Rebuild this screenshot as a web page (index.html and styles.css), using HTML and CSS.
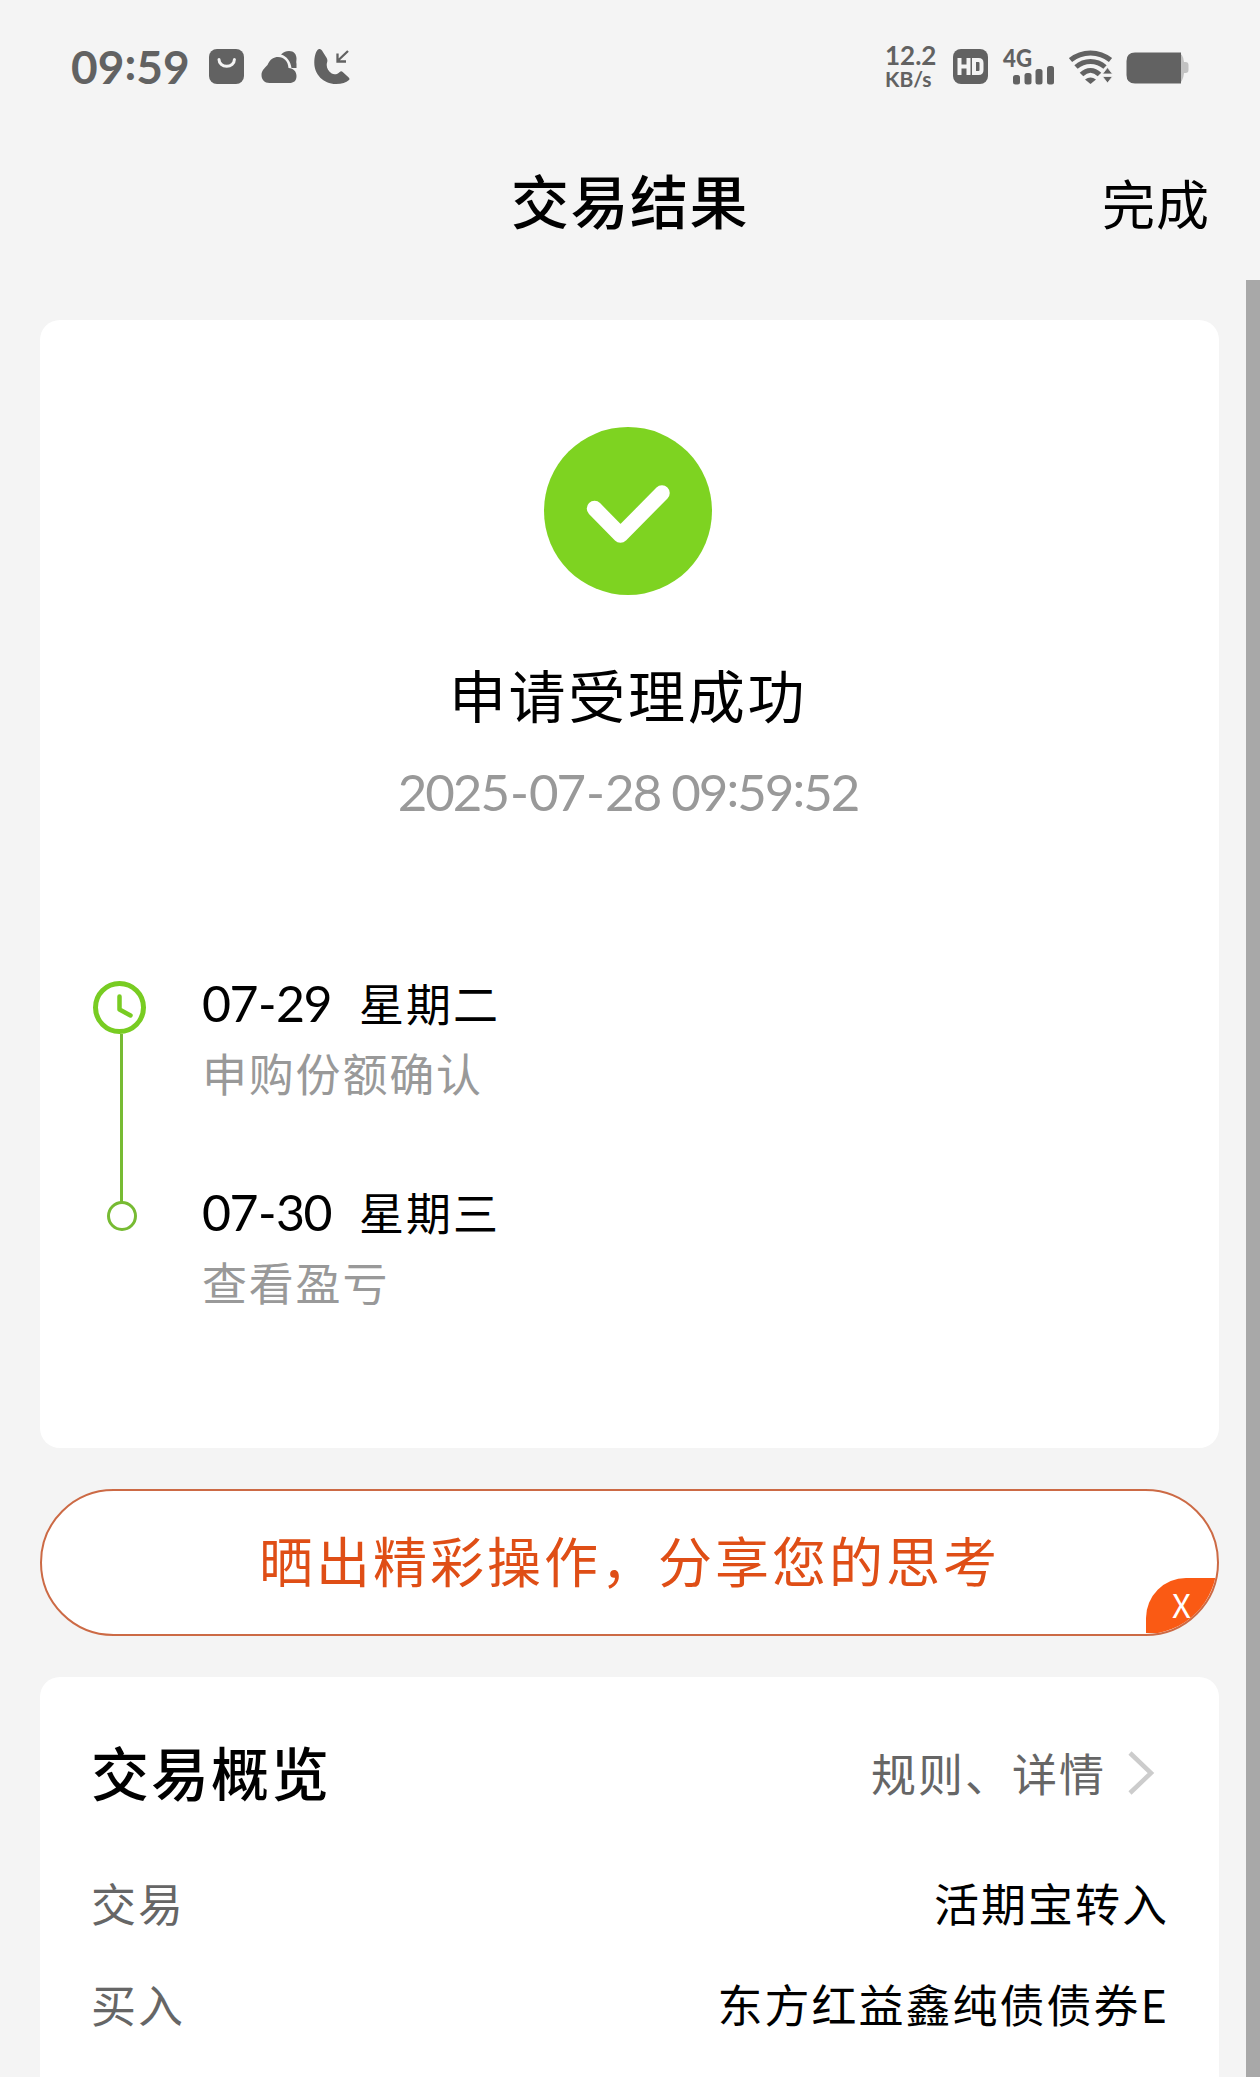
FILE: index.html
```html
<!DOCTYPE html>
<html lang="zh-CN">
<head>
  <meta charset="UTF-8" />
  <meta name="viewport" content="width=device-width, initial-scale=1.0"/>
  <title>交易结果</title>
  <link rel="stylesheet" href="styles.css">
</head>
<body>

  <div class="status-bar">
    <div class="status-left">
      <span class="clock">09<b>:</b>59</span>
      <svg class="icon" width="35" height="35" viewBox="0 0 35 35">
        <rect width="35" height="35" rx="8" fill="#626262"/>
        <path d="M10 10.5a7.7 6.8 0 0 0 15.400 0" fill="none" stroke="#f4f4f4" stroke-width="3" stroke-linecap="round"/>
      </svg>
      <svg class="icon" width="36" height="35" viewBox="0 0 36 35">
        <path d="M8.500 34C3.500 34 .5 30.500 .5 26c0-4 2.500-6.500 6-10C9 10 13 8 17 8c6 0 10 4 10.500 11 5 .5 8 3.500 8 8 0 5-3 7-7 7z" fill="#626262"/>
        <path d="M20 5.500C23 2.500 25 2 28 2c5 0 7.500 3.500 7.500 7.500 0 2-.5 3.500 0 5.500v4h-5C29.500 12 26 7.500 20 5.500z" fill="#626262"/>
      </svg>
      <svg class="icon" width="36" height="35" viewBox="0 0 36 35">
        <path d="M4 .5C1.500 3 .3 8 .3 14 .3 25 9 35 22 35c6 0 10-1.500 13-4 .8-.8.5-1.800-.3-2.500l-6-5.500c-1-.9-2-.9-3 0-2 2-5 3.200-8 1.500-4-2.300-6-7-4.500-11.500.5-1.500 0-2.800-.5-4L8 1.500C7 0 5.300-.5 4 .5z" fill="#626262"/>
        <path d="M34 2L23.500 12M23.500 4.500V12.500H32" fill="none" stroke="#626262" stroke-width="2.300"/>
      </svg>
    </div>
    <div class="status-right">
      <div class="speed">
        <span class="speed-num">12.2</span>
        <span class="speed-unit">KB/s</span>
      </div>
      <svg class="icon-hd" width="35" height="35" viewBox="0 0 35 35">
        <rect width="35" height="35" rx="8" fill="#626262"/>
        <path d="M6.500 9v17M15.500 9v17M6.500 17.500h9" fill="none" stroke="#f4f4f4" stroke-width="4"/>
        <path d="M21 11h4.500q3 0 3 3v7q0 3-3 3H21z" fill="none" stroke="#f4f4f4" stroke-width="4"/>
      </svg>
      <svg class="icon-signal" width="52" height="36" viewBox="0 0 52 36">
        <text x="0" y="18" class="net-type" textLength="29" lengthAdjust="spacingAndGlyphs">4G</text>
        <rect x="10" y="26" width="7" height="9.500" rx="2.500"/>
        <rect x="21.500" y="24" width="7" height="11.500" rx="2.500"/>
        <rect x="32.500" y="20" width="7" height="15.500" rx="2.500"/>
        <rect x="44" y="17" width="7" height="18.500" rx="2.500"/>
      </svg>
      <svg class="icon-wifi" width="44" height="35" viewBox="0 0 44 35">
        <g fill="none" stroke="#626262" stroke-width="5">
          <path d="M1.500 11C13 1.500 30 1.500 41.500 11"/>
          <path d="M7 18C15.500 10.500 27.500 10.500 36 18"/>
          <path d="M12.500 25.500C18 20 25 20 30.500 25.500"/>
        </g>
        <path d="M16 30.500q5.500-4 11 0L21.500 35z" fill="#626262"/>
        <path d="M33.500 25L38.500 18.500 43.500 25zM33.500 27.500h10L38.500 34z" fill="#626262" stroke="#f4f4f4" stroke-width=".8"/>
      </svg>
      <svg class="icon-battery" width="64" height="32" viewBox="0 0 64 32">
        <path d="M50 1h2q5 0 6 9h1.500q3 0 3 3v5q0 3-3 3H58q-1 10-6 10h-2z" fill="#c2c2c2"/>
        <path d="M9 .5h46v31H9q-8.500 0-8.500-8.500V9Q.5 .5 9 .5z" fill="#626262"/>
      </svg>
    </div>
  </div>

  <div class="nav-bar">
    <h1 class="nav-title">交易结果</h1>
    <a class="nav-done">完成</a>
  </div>

  <div class="content">
    <div class="card result-card">
      <svg class="success-icon" width="168" height="168" viewBox="0 0 168 168">
        <circle cx="84" cy="84" r="84" fill="#7ed321"/>
        <path d="M50.500 81.500L76.500 108 118 66" fill="none" stroke="#fff" stroke-width="15.500" stroke-linecap="round" stroke-linejoin="round"/>
      </svg>
      <h2 class="result-title">申请受理成功</h2>
      <p class="result-time">2025<i>-</i>07<i>-</i>28 09<b>:</b>59<b>:</b>52</p>

      <div class="timeline">
        <svg class="timeline-axis" width="54" height="250" viewBox="0 0 54 250">
          <path d="M28.500 53v168" stroke="#77bb33" stroke-width="3"/>
          <circle cx="26.500" cy="26.500" r="24" fill="#fff" stroke="#78cc22" stroke-width="5"/>
          <path d="M26.500 15.500v13l11 6" fill="none" stroke="#78cc22" stroke-width="4.500" stroke-linecap="round" stroke-linejoin="round"/>
          <circle cx="29" cy="235" r="13.500" fill="#fff" stroke="#77bb33" stroke-width="3"/>
        </svg>
        <div class="timeline-list">
          <div class="step">
            <p class="step-date"><span class="num">07<i>-</i>29</span><span>星期二</span></p>
            <p class="step-desc">申购份额确认</p>
          </div>
          <div class="step">
            <p class="step-date"><span class="num">07<i>-</i>30</span><span>星期三</span></p>
            <p class="step-desc">查看盈亏</p>
          </div>
        </div>
      </div>
    </div>

    <div class="share-bar">
      <span class="share-text">晒出精彩操作，分享您的思考</span>
      <span class="share-close">X</span>
    </div>

    <div class="card overview-card">
      <div class="overview-head">
        <h2 class="overview-title">交易概览</h2>
        <a class="overview-link">规则、详情
          <svg width="28" height="46" viewBox="0 0 28 46">
            <path d="M3 3L24 23 3 43" fill="none" stroke="#ccc" stroke-width="4.500"/>
          </svg>
        </a>
      </div>
      <div class="row">
        <span class="label">交易</span>
        <span class="value">活期宝转入</span>
      </div>
      <div class="row">
        <span class="label">买入</span>
        <span class="value">东方红益鑫纯债债券E</span>
      </div>
    </div>
  </div>

  <div class="scrollbar"></div>

</body>
</html>
```

FILE: styles.css
```css
* { box-sizing: border-box; }

body {
  margin: 0;
  height: 2077px;
  overflow: hidden;
  position: relative;
  background: #f4f4f4;
  color: #000;
  font-family: 'Noto Sans CJK SC', sans-serif;
}

h1, h2, p { margin: 0; }
i, b { font-style: normal; font-weight: inherit; }
b { vertical-align: 4px; line-height: 1; }
svg { display: block; flex: none; }

/* Status bar */
.status-bar {
  display: flex;
  justify-content: space-between;
  align-items: center;
  height: 133px;
  padding: 0 70px 0 71px;
  color: #626262;
  font-family: Lato, sans-serif;
}

.status-left, .status-right {
  display: flex;
  align-items: center;
}

.status-left { gap: 17px; }

.clock {
  width: 121px;
  font-size: 46px;
  line-height: 60px;
  font-weight: 700;
  white-space: nowrap;
}

.speed {
  display: flex;
  flex-direction: column;
  width: 50px;
  margin-right: 18px;
  font-weight: 700;
  white-space: nowrap;
}

.speed-num { font-size: 26px; line-height: 25px; }
.speed-unit { font-size: 21px; line-height: 22px; }
.icon-hd { margin-right: 15px; }
.icon-signal { margin-right: 14px; fill: #626262; overflow: visible; }
.net-type { font: 900 24px Lato, sans-serif; }
.icon-wifi { margin-right: 13px; }
.icon-battery { margin-top: 3px; }

/* Title */
.nav-bar {
  display: grid;
  grid-template-columns: 1fr auto 1fr;
  align-items: center;
  height: 147px;
  padding: 0 50px 15px 50px;
}

.nav-title {
  grid-column: 2;
  font-size: 58px;
  line-height: 80px;
  font-weight: 500;
  letter-spacing: 1.500px;
}

.nav-done {
  justify-self: end;
  padding-top: 6px;
  font-size: 53px;
  line-height: 76px;
  letter-spacing: 1px;
}

.content {
  display: flex;
  flex-direction: column;
  gap: 41px;
  padding: 40px 41px 0 40px;
}

.card {
  background: #fff;
  border-radius: 20px;
}

/* Result */
.result-card {
  display: flex;
  flex-direction: column;
  align-items: center;
  height: 1128px;
  padding: 107px 3px 0 0;
}

.result-title {
  margin-top: 58px;
  font-size: 57px;
  line-height: 80px;
  font-weight: 400;
  letter-spacing: 2.700px;
}

.result-time {
  margin-top: 29px;
  height: 60px;
  color: #999;
  font-family: Lato, sans-serif;
  font-size: 51px;
  line-height: 60px;
  letter-spacing: -2px;
  white-space: nowrap;
}

.result-time i { margin: 0 2px; }

.timeline {
  display: flex;
  align-self: stretch;
  gap: 55px;
  margin-top: 159px;
  padding-left: 53px;
}

.timeline-list {
  display: flex;
  flex-direction: column;
  gap: 79px;
}

.step-date {
  display: flex;
  gap: 27px;
  font-size: 45px;
  line-height: 60px;
  height: 60px;
  margin-top: -8px;
  letter-spacing: 2px;
}

.num {
  width: 130px;
  font-family: Lato, sans-serif;
  font-size: 50px;
  letter-spacing: -1.500px;
  white-space: nowrap;
}

.num i { margin: 0 1px; }

.step-desc {
  margin-top: 5px;
  height: 73px;
  color: #999;
  font-size: 45px;
  line-height: 69px;
  letter-spacing: 1.800px;
}

/* Share banner */
.share-bar {
  display: flex;
  justify-content: center;
  height: 147px;
  border: 2px solid #cc6a45;
  border-radius: 74px;
  background: #fff;
  position: relative;
  overflow: hidden;
}

.share-text {
  color: #df4e16;
  font-size: 54px;
  line-height: 138px;
  letter-spacing: 3px;
}

.share-close {
  position: absolute;
  right: 0;
  bottom: 1px;
  width: 71px;
  height: 55px;
  border-top-left-radius: 40px;
  background: #fa5a14;
  color: #fff;
  font-size: 33px;
  line-height: 52px;
  text-align: center;
}

/* Overview */
.overview-card {
  height: 440px;
  padding: 0 50px 0 51px;
}

.overview-head {
  display: flex;
  justify-content: space-between;
  align-items: center;
  height: 187px;
}

.overview-title {
  font-size: 58px;
  line-height: 80px;
  font-weight: 500;
  letter-spacing: 2px;
}

.overview-link {
  display: flex;
  align-items: center;
  gap: 21px;
  padding: 4px 14px 0 0;
  color: #666;
  font-size: 45px;
  line-height: 60px;
  letter-spacing: 2px;
}

.row {
  display: flex;
  justify-content: space-between;
  height: 101px;
  font-size: 45px;
  line-height: 78px;
  letter-spacing: 2px;
}

.label { color: #666; }

.scrollbar {
  position: absolute;
  top: 280px;
  right: 0;
  bottom: 0;
  width: 14px;
  background: #a8a8a8;
}
```
